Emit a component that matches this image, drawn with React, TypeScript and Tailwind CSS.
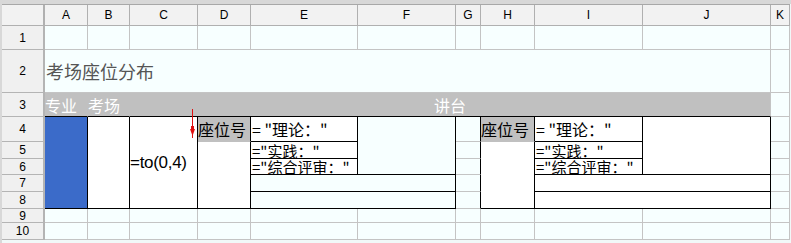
import type { ReactNode } from 'react';

const cols = ['A', 'B', 'C', 'D', 'E', 'F', 'G', 'H', 'I', 'J', 'K'];
const cjk = { fontFamily: '"Noto Sans CJK SC", sans-serif' };

function Cell({ className, children }: { className: string; children?: ReactNode }) {
  return <div className={`overflow-hidden whitespace-nowrap border-r border-b ${className}`}>{children}</div>;
}

const plain = 'bg-[#f7ffff] border-[#c4c4c4]';
const boxed = 'bg-white border-black flex items-center pl-px leading-none text-black';

export default function App() {
  return (
    <div
      className="relative w-[791px] h-[243px] overflow-hidden bg-[#f1f8f8] border-t-[4px] border-l-2 border-[#d8d8d8]"
      style={{ fontFamily: '"Liberation Sans", "Noto Sans CJK SC", sans-serif' }}
    >
      <div className="grid w-[788px] border-t border-[#a8a8a8] grid-cols-[43px_43px_42px_68px_53px_107px_98px_25px_54px_108px_128px_19px] grid-rows-[21px_24px_43px_24px_25px_17px_16px_17px_17px_14px_17px]">
        {/* column header */}
        <div className="col-start-1 row-start-1 border-r-2 border-b border-[#b0b0b0] bg-[#f2f2f2]" />
        {cols.map((c, i) => (
          <div
            key={c}
            className="row-start-1 flex items-center justify-center border-r border-b border-[#b0b0b0] bg-[#f2f2f2] text-[12px] text-black"
            style={{ gridColumnStart: i + 2 }}
          >
            {c}
          </div>
        ))}

        {/* row header */}
        {Array.from({ length: 10 }, (_, i) => (
          <div
            key={i}
            className="col-start-1 flex items-center justify-center border-r-2 border-b border-[#b4b4b4] bg-[#f0f0f0] text-[12px] text-black"
            style={{ gridRowStart: i + 2 }}
          >
            {i + 1}
          </div>
        ))}

        {/* row 1 */}
        {cols.map((c, i) => (
          <div key={c} className={`row-start-2 border-r border-b ${plain}`} style={{ gridColumnStart: i + 2 }} />
        ))}

        {/* row 2 */}
        <Cell className={`col-start-2 col-span-10 row-start-3 ${plain} flex items-center pl-px text-[18px] text-[#555555]`}>
          <span style={cjk}>考场座位分布</span>
        </Cell>
        <Cell className={`col-start-12 row-start-3 ${plain}`} />

        {/* row 3 */}
        <Cell className="col-start-2 row-start-4 bg-[#c0c0c0] border-r-[#c0c0c0] border-b-black flex items-center text-[16px] text-white">
          <span style={cjk}>专业</span>
        </Cell>
        <Cell className="col-start-3 row-start-4 bg-[#c0c0c0] border-r-[#c0c0c0] border-b-black flex items-center text-[16px] text-white">
          <span style={cjk}>考场</span>
        </Cell>
        <Cell className="col-start-4 col-span-8 row-start-4 bg-[#c0c0c0] border-r-[#c4c4c4] border-b-black flex items-center justify-center text-[16px] text-white">
          <span style={cjk}>讲台</span>
        </Cell>
        <Cell className={`col-start-12 row-start-4 ${plain}`} />

        {/* left table rows 4-8 */}
        <Cell className="col-start-2 row-start-5 row-span-5 bg-[#3b6bc9] border-black" />
        <Cell className="col-start-3 row-start-5 row-span-5 bg-white border-black" />
        <Cell className="col-start-4 row-start-5 row-span-5 bg-white border-black flex items-center text-[17px] tracking-[-0.3px] text-black">
          =to(0,4)
        </Cell>
        <Cell className="col-start-5 row-start-5 bg-[#c0c0c0] border-r-black border-b-[#c0c0c0] flex items-center text-[16px] text-black">
          <span style={cjk}>座位号</span>
        </Cell>
        <Cell className="col-start-5 row-start-6 row-span-4 bg-white border-black" />
        <Cell className={`col-start-6 row-start-5 text-[16px] ${boxed}`}>
          <span style={cjk}>= "理论："</span>
        </Cell>
        <Cell className={`col-start-6 row-start-6 text-[15px] ${boxed}`}>
          <span style={cjk}>="实践："</span>
        </Cell>
        <Cell className={`col-start-6 row-start-7 text-[15px] ${boxed}`}>
          <span style={cjk}>="综合评审："</span>
        </Cell>
        <Cell className="col-start-7 row-start-5 row-span-3 bg-[#f7ffff] border-black" />
        <Cell className="col-start-6 col-span-2 row-start-8 bg-[#f7ffff] border-black" />
        <Cell className="col-start-6 col-span-2 row-start-9 bg-[#f7ffff] border-black" />

        {/* gap column G */}
        <Cell className="col-start-8 row-start-5 bg-[#f7ffff] border-r-black border-b-[#c4c4c4]" />
        <Cell className="col-start-8 row-start-6 bg-[#f7ffff] border-r-black border-b-[#c4c4c4]" />
        <Cell className="col-start-8 row-start-7 bg-[#f7ffff] border-r-black border-b-[#c4c4c4]" />
        <Cell className="col-start-8 row-start-8 bg-[#f7ffff] border-r-black border-b-[#c4c4c4]" />
        <Cell className="col-start-8 row-start-9 bg-[#f7ffff] border-r-black border-b-[#c4c4c4]" />

        {/* right table */}
        <Cell className="col-start-9 row-start-5 bg-[#c0c0c0] border-r-black border-b-[#c0c0c0] flex items-center text-[16px] text-black">
          <span style={cjk}>座位号</span>
        </Cell>
        <Cell className="col-start-9 row-start-6 row-span-4 bg-white border-black" />
        <Cell className={`col-start-10 row-start-5 text-[16px] ${boxed}`}>
          <span style={cjk}>= "理论："</span>
        </Cell>
        <Cell className={`col-start-10 row-start-6 text-[15px] ${boxed}`}>
          <span style={cjk}>="实践："</span>
        </Cell>
        <Cell className={`col-start-10 row-start-7 text-[15px] ${boxed}`}>
          <span style={cjk}>="综合评审："</span>
        </Cell>
        <Cell className="col-start-11 row-start-5 row-span-3 bg-white border-black" />
        <Cell className="col-start-10 col-span-2 row-start-8 bg-white border-black" />
        <Cell className="col-start-10 col-span-2 row-start-9 bg-white border-black" />

        {/* column K rows 4-8 */}
        <Cell className={`col-start-12 row-start-5 ${plain}`} />
        <Cell className={`col-start-12 row-start-6 ${plain}`} />
        <Cell className={`col-start-12 row-start-7 ${plain}`} />
        <Cell className={`col-start-12 row-start-8 ${plain}`} />
        <Cell className={`col-start-12 row-start-9 ${plain}`} />

        {/* rows 9-10 */}
        {cols.map((c, i) => (
          <div key={`9${c}`} className={`row-start-10 border-r border-b ${plain}`} style={{ gridColumnStart: i + 2 }} />
        ))}
        {cols.map((c, i) => (
          <div key={`10${c}`} className={`row-start-11 border-r border-b ${plain}`} style={{ gridColumnStart: i + 2 }} />
        ))}
      </div>

      {/* red fill-down marker */}
      <svg className="absolute left-[188px] top-[105px]" width="5" height="30" viewBox="0 0 5 30">
        <line x1="2.5" y1="0" x2="2.5" y2="29" stroke="#e01010" strokeWidth="1" />
        <rect x="1" y="17" width="3" height="5" fill="#e01010" />
        <polygon points="0,20 5,20 2.5,27" fill="#e01010" />
      </svg>
    </div>
  );
}
